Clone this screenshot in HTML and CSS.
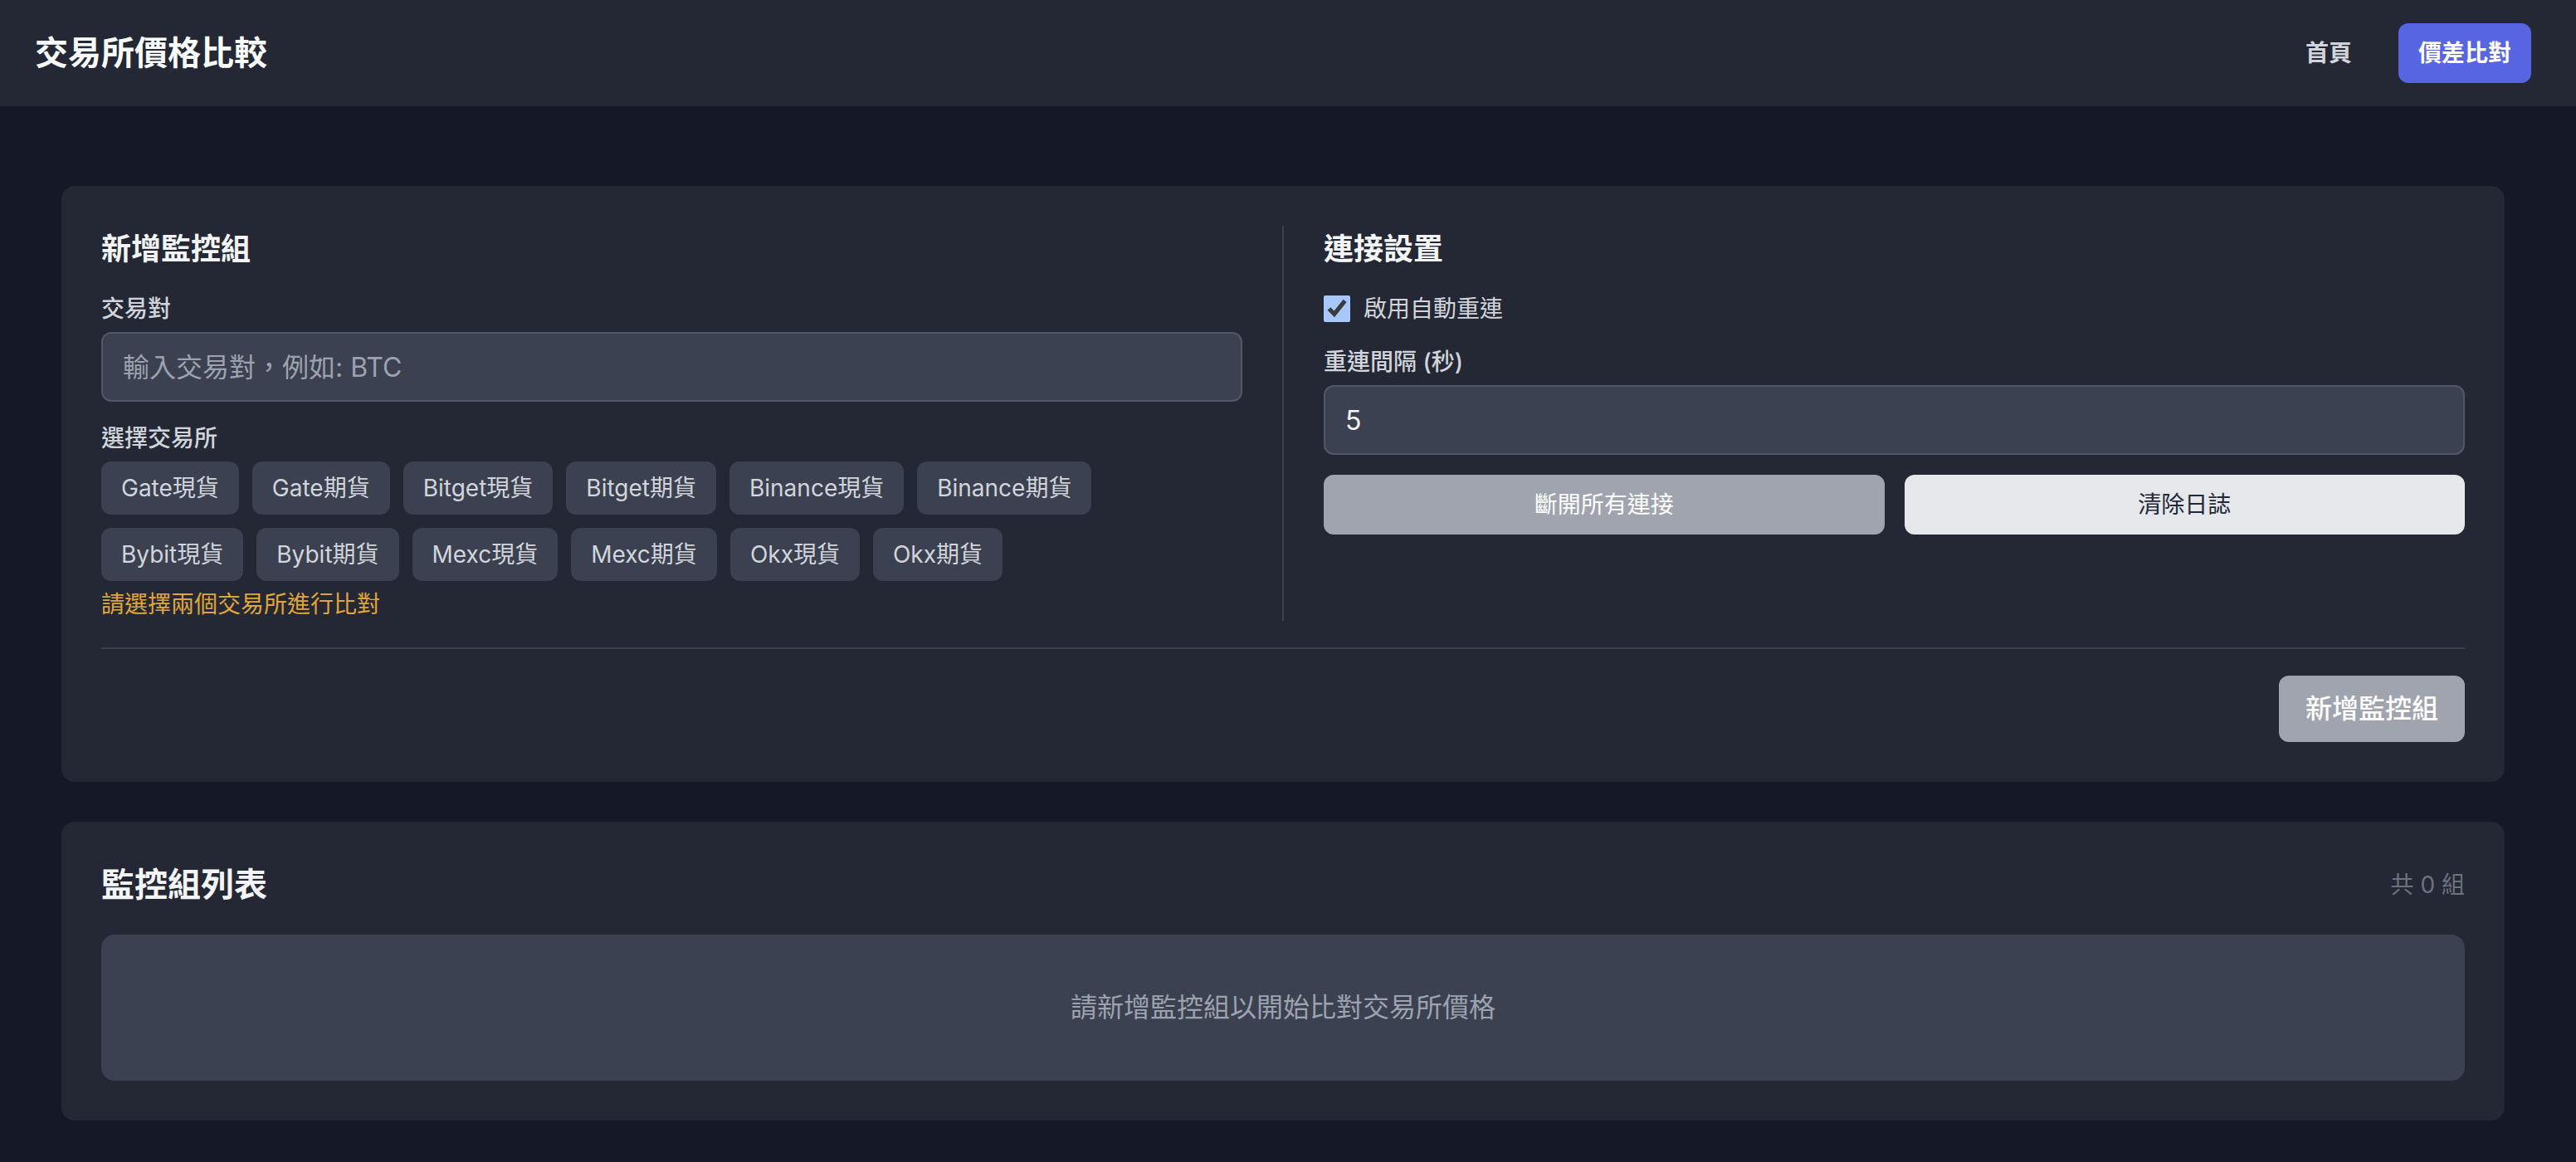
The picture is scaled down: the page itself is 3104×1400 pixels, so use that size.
FILE: index.html
```html
<!DOCTYPE html>
<html lang="zh-Hant">
<head>
    <meta charset="UTF-8">
    <meta name="viewport" content="width=device-width, initial-scale=1.0">
    <title>交易所價格比較</title>
    <link rel="stylesheet" href="styles.css">
</head>
<body>
    <header class="topbar">
        <h1 class="brand">交易所價格比較</h1>
        <nav class="nav">
            <a href="#">首頁</a>
            <a href="#" class="active">價差比對</a>
        </nav>
    </header>

    <main class="page">
        <section class="panel">
            <div class="panel-cols">
                <div class="col">
                    <h2 class="panel-title">新增監控組</h2>
                    <div class="group">
                        <label class="field-label">交易對</label>
                        <input class="text-input" type="text" placeholder="輸入交易對，例如: BTC">
                    </div>
                    <div>
                        <label class="field-label">選擇交易所</label>
                        <div class="chips">
                            <button class="chip">Gate現貨</button>
                            <button class="chip">Gate期貨</button>
                            <button class="chip">Bitget現貨</button>
                            <button class="chip">Bitget期貨</button>
                            <button class="chip">Binance現貨</button>
                            <button class="chip">Binance期貨</button>
                            <button class="chip">Bybit現貨</button>
                            <button class="chip">Bybit期貨</button>
                            <button class="chip">Mexc現貨</button>
                            <button class="chip">Mexc期貨</button>
                            <button class="chip">Okx現貨</button>
                            <button class="chip">Okx期貨</button>
                        </div>
                        <p class="hint">請選擇兩個交易所進行比對</p>
                    </div>
                </div>

                <div class="col col-right">
                    <h2 class="panel-title">連接設置</h2>
                    <div class="group">
                        <label class="check-row">
                            <input type="checkbox" checked>
                            <span>啟用自動重連</span>
                        </label>
                    </div>
                    <div class="group">
                        <label class="field-label">重連間隔 (秒)</label>
                        <input class="text-input" type="number" value="5">
                    </div>
                    <div class="btn-row">
                        <button class="btn btn-muted">斷開所有連接</button>
                        <button class="btn btn-light">清除日誌</button>
                    </div>
                </div>
            </div>

            <div class="panel-footer">
                <button class="btn-add">新增監控組</button>
            </div>
        </section>

        <section class="panel">
            <div class="list-head">
                <h2 class="list-title">監控組列表</h2>
                <span class="count">共 0 組</span>
            </div>
            <div class="empty">請新增監控組以開始比對交易所價格</div>
        </section>
    </main>
</body>
</html>
```

FILE: styles.css
```css
* {
    box-sizing: border-box;
}
body {
    margin: 0;
    background-color: #151826;
    color: #f3f4f6;
    font-family: Inter, "Noto Sans CJK TC", sans-serif;
    font-size: 28px;
    line-height: 40px;
}
.topbar {
    height: 128px;
    background-color: #232834;
    display: flex;
    align-items: center;
    justify-content: space-between;
    padding: 0 54px 0 42px;
}
.brand {
    margin: 0;
    font-size: 40px;
    line-height: 56px;
    font-weight: 700;
    color: #f9fafb;
}
.nav {
    display: flex;
    align-items: center;
    gap: 32px;
}
.nav a {
    color: #d1d5db;
    text-decoration: none;
    font-weight: 600;
    padding: 16px 24px;
    border-radius: 12px;
}
.nav a.active {
    background-color: #5865e3;
    color: #ffffff;
}
.page {
    display: flex;
    flex-direction: column;
    gap: 48px;
    padding: 96px 86px 96px 74px;
}
.panel {
    background-color: #232834;
    border-radius: 16px;
    padding: 48px;
}
.panel-cols {
    display: flex;
    gap: 48px;
}
.col {
    flex: 1 1 0;
    min-width: 0;
}
.col-right {
    border-left: 2px solid #3b4150;
    padding-left: 48px;
}
.panel-title {
    margin: 0 0 24px;
    font-size: 36px;
    line-height: 56px;
    font-weight: 700;
}
.group {
    margin-bottom: 24px;
}
.field-label {
    display: block;
    margin-bottom: 8px;
    font-weight: 500;
    color: #d1d5db;
}
.text-input {
    display: block;
    width: 100%;
    height: 84px;
    padding: 0 24px;
    background-color: #3b4150;
    border: 2px solid #515866;
    border-radius: 12px;
    color: #f3f4f6;
    font-family: inherit;
    font-size: 32px;
    outline: none;
}
.text-input::placeholder {
    color: #9ca3af;
}
.text-input::-webkit-inner-spin-button {
    -webkit-appearance: none;
}
.chips {
    display: flex;
    flex-wrap: wrap;
    gap: 16px;
}
.chip {
    background-color: #3b4150;
    color: #d1d5db;
    border: none;
    border-radius: 12px;
    padding: 12px 24px;
    font-family: inherit;
    font-size: 28px;
    line-height: 40px;
    cursor: pointer;
}
.hint {
    margin: 8px 0 0;
    color: #e0a53a;
}
.check-row {
    display: flex;
    align-items: center;
    gap: 16px;
    color: #d1d5db;
}
.check-row input {
    width: 32px;
    height: 32px;
    margin: 0;
    accent-color: #a8c7fa;
}
.btn-row {
    display: flex;
    gap: 24px;
}
.btn {
    flex: 1 1 0;
    border: none;
    border-radius: 12px;
    padding: 16px;
    font-family: inherit;
    font-size: 28px;
    line-height: 40px;
    font-weight: 400;
    cursor: pointer;
}
.btn-muted {
    background-color: #a0a4ae;
    color: #ffffff;
}
.btn-light {
    background-color: #e5e7eb;
    color: #1f2937;
}
.panel-footer {
    margin-top: 32px;
    border-top: 2px solid #3b4150;
    padding-top: 32px;
    display: flex;
    justify-content: flex-end;
}
.btn-add {
    background-color: #a0a4ae;
    color: #ffffff;
    border: none;
    border-radius: 12px;
    padding: 16px 32px;
    font-family: inherit;
    font-size: 32px;
    line-height: 48px;
    font-weight: 500;
}
.list-head {
    display: flex;
    align-items: center;
    justify-content: space-between;
    margin-bottom: 32px;
}
.list-title {
    margin: 0;
    font-size: 40px;
    line-height: 56px;
    font-weight: 700;
}
.count {
    color: #6b7280;
}
.empty {
    background-color: #3b4150;
    border-radius: 16px;
    padding: 64px;
    text-align: center;
    color: #9ca3af;
    font-size: 32px;
    line-height: 48px;
}
```
